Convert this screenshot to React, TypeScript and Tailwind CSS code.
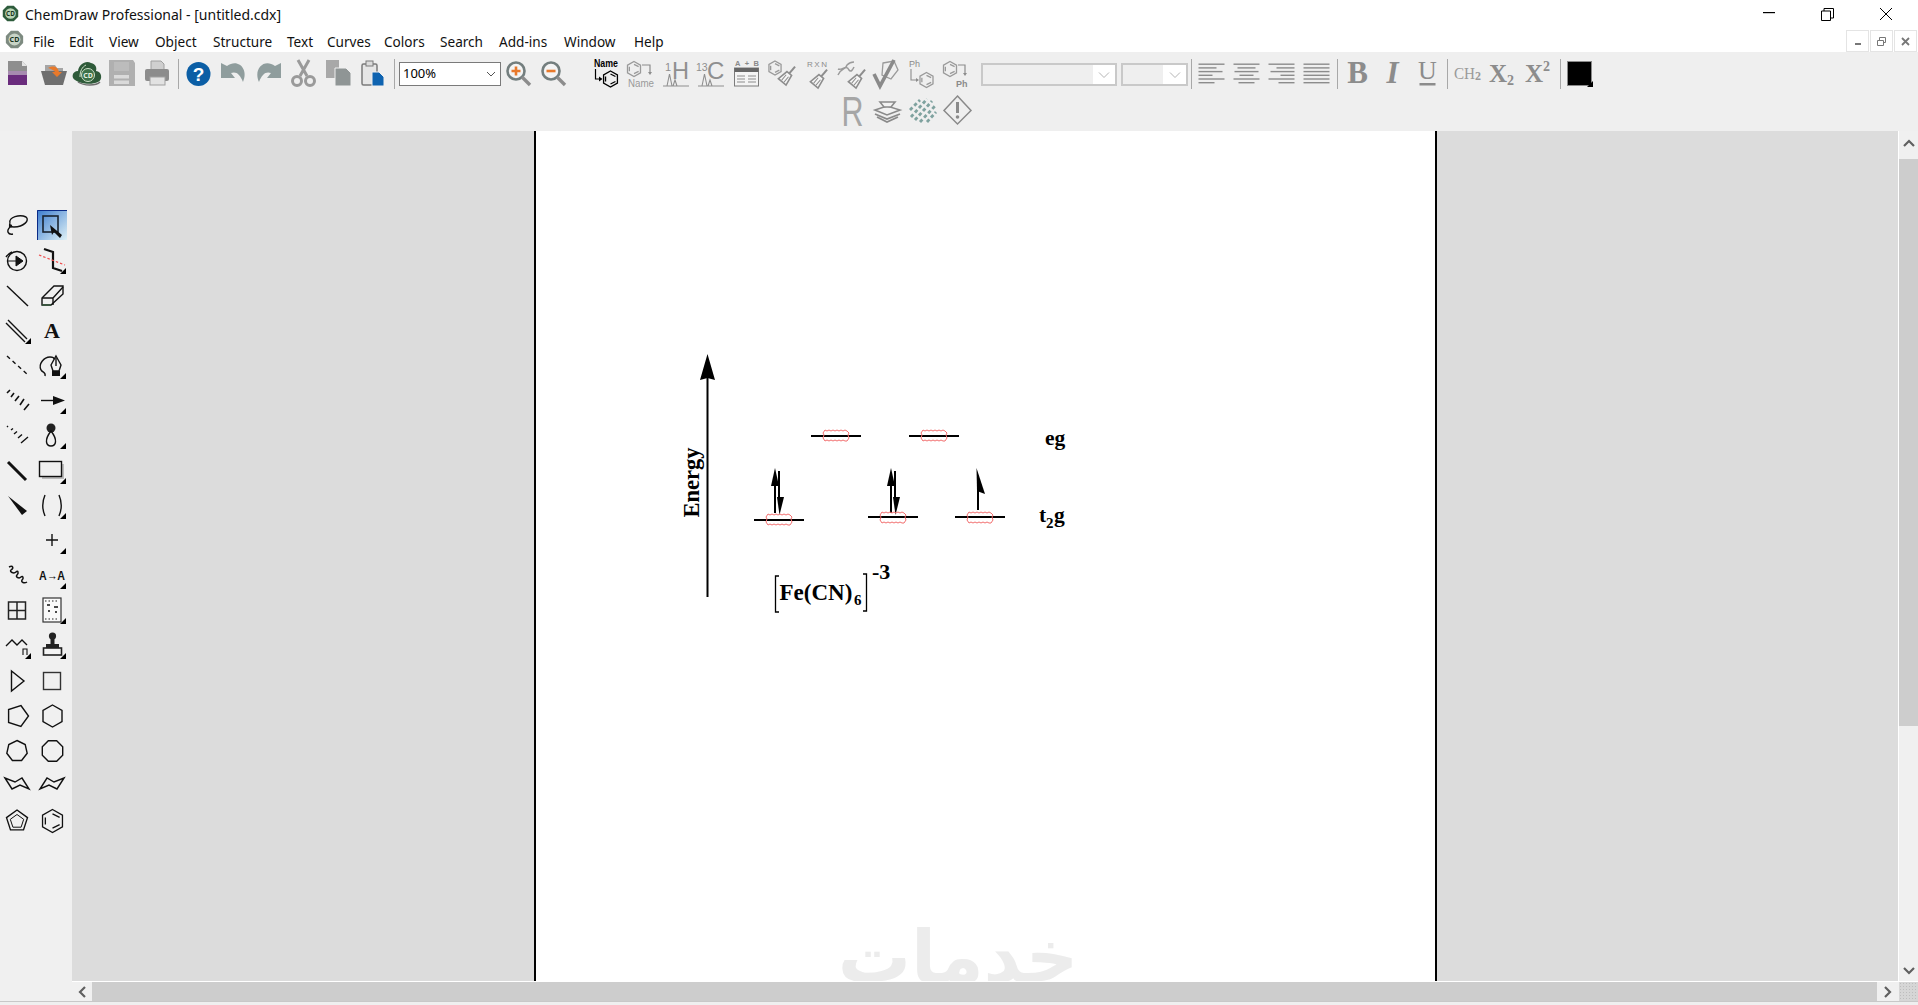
import type { ReactNode } from 'react';

const SERIF = "font-['Liberation_Serif','Times_New_Roman',serif]";
const UI = "font-['Noto_Sans','Open_Sans',sans-serif]";

const MENU = [
  { label: 'File', w: 'w-[36px]' },
  { label: 'Edit', w: 'w-[40px]' },
  { label: 'View', w: 'w-[46px]' },
  { label: 'Object', w: 'w-[58px]' },
  { label: 'Structure', w: 'w-[74px]' },
  { label: 'Text', w: 'w-[40px]' },
  { label: 'Curves', w: 'w-[57px]' },
  { label: 'Colors', w: 'w-[56px]' },
  { label: 'Search', w: 'w-[59px]' },
  { label: 'Add-ins', w: 'w-[65px]' },
  { label: 'Window', w: 'w-[70px]' },
  { label: 'Help', w: 'w-[40px]' },
];

function hex(cx: number, cy: number, r: number) {
  const k = r * 0.866;
  return `M${cx} ${cy - r}L${cx + k} ${cy - r / 2}V${cy + r / 2}L${cx} ${cy + r}L${cx - k} ${cy + r / 2}V${cy - r / 2}Z`;
}

// regular polygon, point up
function ngon(cx: number, cy: number, r: number, n: number, start = -90) {
  const pts = [];
  for (let i = 0; i < n; i++) {
    const a = ((start + (360 / n) * i) * Math.PI) / 180;
    pts.push(`${(cx + r * Math.cos(a)).toFixed(1)},${(cy + r * Math.sin(a)).toFixed(1)}`);
  }
  return pts.join(' ');
}

function Ic({ children, className = '' }: { children: ReactNode; className?: string }) {
  return (
    <svg width="35" height="35" viewBox="0 0 35 35" className={`block shrink-0 overflow-visible ${className}`}>
      {children}
    </svg>
  );
}

function Sep({ w }: { w: string }) {
  return (
    <div className={`${w} h-[35px] shrink-0 flex justify-center items-center`}>
      <div className="w-px h-[30px] bg-[#a8a8a8]" />
    </div>
  );
}

function Broom({ x, y, c = '#8d8d8d' }: { x: number; y: number; c?: string }) {
  return (
    <g transform={`translate(${x} ${y}) rotate(40)`} fill="none" stroke={c} strokeWidth="1.6">
      <path d="M0 -11V-2" strokeWidth="2" />
      <path d="M-3 -2H3L5 9H-5Z" fill="#f5f5f5" />
      <path d="M-1.5 1V8M1.5 1V8" strokeWidth="1" />
    </g>
  );
}

function Benz({ cx, cy, r, c }: { cx: number; cy: number; r: number; c: string }) {
  const k = r * 0.62;
  return (
    <g fill="none" stroke={c} strokeWidth="1.3">
      <path d={hex(cx, cy, r)} />
      <path d={`M${cx - k} ${cy - k * 0.5}V${cy + k * 0.5}M${cx} ${cy - k}L${cx + k} ${cy - k * 0.5}M${cx} ${cy + k}L${cx + k} ${cy + k * 0.5}`} />
    </g>
  );
}

function AlignIcon({ rows }: { rows: number[][] }) {
  return (
    <Ic>
      {rows.map((r, i) => (
        <rect key={i} x={r[0]} y={7.5 + i * 3.7} width={r[1]} height="1.4" fill="#8c8c8c" />
      ))}
    </Ic>
  );
}

function Combo({ w, fill }: { w: string; fill: string }) {
  return (
    <div className={`${w} h-[23px] mt-[7px] shrink-0 bg-white border-2 border-[#c9c9c9] flex items-center`}>
      <div className={`${fill} h-full bg-[#efefef]`} />
      <svg width="12" height="8" viewBox="0 0 12 8" className="ml-auto mr-[5px]">
        <path d="M1 1.5L6 6.5L11 1.5" fill="none" stroke="#b5b5b5" strokeWidth="1" />
      </svg>
    </div>
  );
}

function CdLogo({ size, muted }: { size: number; muted?: boolean }) {
  return (
    <svg width={size} height={size} viewBox="0 0 20 20" className="block shrink-0">
      <polygon points={ngon(10, 10, 9.8, 8, -67.5)} fill={muted ? '#7d8a80' : '#2e5c3c'} />
      <circle cx="10" cy="10" r="6.3" fill={muted ? '#c8d4c6' : '#b9d3b4'} />
      <text x="10" y="12.6" textAnchor="middle" fontSize="7.5" fontWeight="700" fill="#18361f" className={UI}>
        CD
      </text>
    </svg>
  );
}

function TopToolbar() {
  return (
    <div className="h-[79px] bg-[#efefef] pt-[4px] shrink-0">
      <div className="flex h-[35px]">
        {/* new */}
        <Ic>
          <path d="M8 5H22L27 10V29H8Z" fill="#8e8e8e" />
          <path d="M22 5L27 10H22Z" fill="#e4e4e4" />
          <path d="M8 15H27V19H8Z" fill="#a78bb0" />
          <path d="M8 19H27V29H8Z" fill="#6a2c7d" />
        </Ic>
        {/* open */}
        <Ic>
          <path d="M10 9H20L22 12H28V27H10Z" fill="#a5a5a5" />
          <path d="M6 15H32L28 29H10Z" fill="#6f6f6f" />
          <path d="M13 12C19 9 23 11 24 16H27L22 21L17 16H20C19 14 16 13 13 12Z" fill="#e8792b" />
        </Ic>
        {/* cloud */}
        <Ic>
          <path d="M5 24C1 22 2 15 8 15C9 8 16 4 21 7C26 8 27 12 26 15C32 15 33 24 28 26C22 29 10 28 5 24Z" fill="#2e5a39" />
          <path d="M8 26C14 30 26 30 30 26" fill="none" stroke="#6e6e6e" strokeWidth="1.5" />
          <circle cx="18" cy="19" r="6.5" fill="#3d7148" stroke="#cfe0c9" strokeWidth="1" />
          <path d="M10 21C10 15 12 11 16 9" fill="none" stroke="#cfe0c9" strokeWidth="1" />
          <text x="18" y="21.5" textAnchor="middle" fontSize="7" fontWeight="700" fill="#e6efe2" className={UI}>
            CD
          </text>
        </Ic>
        {/* save */}
        <Ic>
          <path d="M4 4H28L30 7V30H4Z" fill="#b0b0b0" />
          <rect x="9" y="6" width="15" height="9" fill="#bcbcbc" />
          <rect x="9" y="19" width="15" height="3.5" fill="#dadada" />
          <rect x="9" y="24.5" width="15" height="3.5" fill="#dadada" />
        </Ic>
        {/* print */}
        <Ic>
          <path d="M11 5H21L24 8V14H11Z" fill="#cfcfcf" stroke="#a0a0a0" />
          <rect x="5" y="13" width="24" height="12" rx="2" fill="#8c8c8c" />
          <rect x="10" y="21" width="15" height="8" fill="#e2e2e2" stroke="#a0a0a0" />
        </Ic>
        <Sep w="w-[6px]" />
        {/* help */}
        <Ic>
          <circle cx="17.5" cy="18" r="12" fill="#0b5ea5" />
          <text x="17.5" y="24.5" textAnchor="middle" fontSize="19" fontWeight="700" fill="#fff" className="font-['Liberation_Sans',sans-serif]">
            ?
          </text>
        </Ic>
        {/* undo */}
        <Ic>
          <path d="M5 7V22H19L15 17C20 15 24 18 27 26C33 13 22 2 11 10Z" fill="#8f9d9d" />
        </Ic>
        {/* redo */}
        <Ic>
          <path d="M30 7V22H16L20 17C15 15 11 18 8 26C2 13 13 2 24 10Z" fill="#8f9d9d" />
        </Ic>
        {/* cut */}
        <Ic>
          <path d="M12 4L21 20M23 4L14 20" stroke="#9a9a9a" strokeWidth="3" fill="none" />
          <ellipse cx="11" cy="25" rx="4.5" ry="4.5" fill="none" stroke="#9a9a9a" strokeWidth="3" />
          <ellipse cx="24" cy="25" rx="4.5" ry="4.5" fill="none" stroke="#9a9a9a" strokeWidth="3" />
        </Ic>
        {/* copy */}
        <Ic>
          <path d="M5 4H18V22H5Z" fill="#a8a8a8" />
          <path d="M14 12H25L30 17V30H14Z" fill="#8f9595" stroke="#efefef" />
        </Ic>
        {/* paste */}
        <Ic>
          <rect x="6" y="8" width="15" height="21" rx="1.5" fill="#e6e6e6" stroke="#7b7b7b" strokeWidth="1.5" />
          <rect x="10" y="5" width="7" height="5" fill="#dcdcdc" stroke="#7b7b7b" />
          <path d="M16 16H23L28 21V30H16Z" fill="#0e63b0" stroke="#efefef" />
        </Ic>
        <Sep w="w-[7px]" />
        <div className="w-[102px] h-[24px] mt-[6px] ml-px shrink-0 bg-white border border-[#7a7a7a] flex items-center pl-[3px]">
          <span className={`${UI} text-[13px] text-black`}>100%</span>
          <svg width="10" height="6" viewBox="0 0 10 6" className="ml-auto mr-[4px]">
            <path d="M1 1L5 5L9 1" fill="none" stroke="#555" strokeWidth="1" />
          </svg>
        </div>
        {/* zoom in */}
        <Ic>
          <circle cx="15" cy="15" r="8.5" fill="#f4f4f4" stroke="#737e7e" strokeWidth="2.6" />
          <path d="M21 21L29 29" stroke="#8c8c8c" strokeWidth="3.4" />
          <path d="M15 10.5V19.5M10.5 15H19.5" stroke="#e8792b" strokeWidth="2.6" />
        </Ic>
        {/* zoom out */}
        <Ic>
          <circle cx="15" cy="15" r="8.5" fill="#f4f4f4" stroke="#737e7e" strokeWidth="2.6" />
          <path d="M21 21L29 29" stroke="#8c8c8c" strokeWidth="3.4" />
          <path d="M10.5 15H19.5" stroke="#e8792b" strokeWidth="2.6" />
        </Ic>
        <div className="w-[18px] shrink-0" />
        {/* name to structure */}
        <Ic>
          <text x="5" y="10.5" fontSize="10" fontWeight="700" textLength="24" lengthAdjust="spacingAndGlyphs" fill="#000" className="font-['Liberation_Sans',sans-serif]">
            Name
          </text>
          <path d="M6.5 13V23H11" fill="none" stroke="#000" strokeWidth="1.2" />
          <path d="M10 20.5L13.5 23L10 25.5Z" fill="#000" />
          <Benz cx={21.5} cy={23} r={8} c="#000" />
        </Ic>
        {/* structure to name */}
        <Ic>
          <Benz cx={10} cy={13} r={7.5} c="#9a9a9a" />
          <path d="M18 9H26V17" fill="none" stroke="#8c8c8c" strokeWidth="1.2" />
          <path d="M24 16H28L26 19Z" fill="#8c8c8c" />
          <text x="4" y="31" fontSize="10" textLength="26" lengthAdjust="spacingAndGlyphs" fill="#9a9a9a" className="font-['Liberation_Sans',sans-serif]">
            Name
          </text>
        </Ic>
        {/* 1H */}
        <Ic>
          <text x="13" y="23" fontSize="24" textLength="17" lengthAdjust="spacingAndGlyphs" fill="#8f8f8f" className="font-['Liberation_Sans',sans-serif]">
            H
          </text>
          <text x="6" y="15" fontSize="11" fill="#8f8f8f" className="font-['Liberation_Sans',sans-serif]">
            1
          </text>
          <path d="M4 30H30M8 30L10.5 18L13 30M14 30L16 24L18 30" fill="none" stroke="#8f8f8f" strokeWidth="1.1" />
        </Ic>
        {/* 13C */}
        <Ic>
          <text x="13" y="23" fontSize="24" fill="#8f8f8f" className="font-['Liberation_Sans',sans-serif]">
            C
          </text>
          <text x="2" y="15" fontSize="10.5" fill="#8f8f8f" className="font-['Liberation_Sans',sans-serif]">
            13
          </text>
          <path d="M4 30H30M8 30L10.5 18L13 30M14 30L16 24L18 30" fill="none" stroke="#8f8f8f" strokeWidth="1.1" />
        </Ic>
        {/* table */}
        <Ic>
          <text x="6" y="10" fontSize="7.5" fontWeight="700" textLength="24" fill="#8a8a8a" className="font-['Liberation_Sans',sans-serif]">
            A + B
          </text>
          <rect x="5.5" y="12" width="24" height="18" fill="#f4f4f4" stroke="#7c7c7c" />
          <rect x="5.5" y="12" width="24" height="4" fill="#666" />
          <path d="M8 20H16M8 23H16M8 26H16M19 20H27M19 23H27M19 26H27" stroke="#8c8c8c" strokeWidth="1.2" />
        </Ic>
        {/* clean up structure */}
        <Ic>
          <Benz cx={11} cy={12} r={7} c="#9a9a9a" />
          <Broom x={24} y={19} />
        </Ic>
        {/* clean up reaction */}
        <Ic>
          <text x="8" y="11" fontSize="8" textLength="20" fill="#8c8c8c" className="font-['Liberation_Sans',sans-serif]">
            RXN
          </text>
          <Broom x={21} y={22} />
        </Ic>
        {/* clean up biopolymer */}
        <Ic>
          <path d="M4 19C8 11 12 14 13 9C16 6 18 6 20 6M4 13C8 15 12 8 15 14C17 17 19 13 20 11" fill="none" stroke="#9a9a9a" strokeWidth="1.5" />
          <Broom x={24} y={22} />
        </Ic>
        {/* check structure */}
        <Ic>
          <path d="M14 7L25 5L29 14L22 23L13 19Z" fill="none" stroke="#9a9a9a" strokeWidth="1.3" />
          <path d="M5 18L11 30L25 4" fill="none" stroke="#8a8a8a" strokeWidth="3.6" />
        </Ic>
        {/* Ph to structure */}
        <Ic>
          <text x="5" y="11" fontSize="9" fill="#8a8a8a" className="font-['Liberation_Sans',sans-serif]">
            Ph
          </text>
          <path d="M7 13V24H13" fill="none" stroke="#8c8c8c" strokeWidth="1.1" />
          <path d="M12 22L15 24L12 26Z" fill="#8c8c8c" />
          <Benz cx={22.5} cy={24} r={7.5} c="#9a9a9a" />
        </Ic>
        {/* structure to Ph */}
        <Ic>
          <Benz cx={11} cy={13} r={7.5} c="#9a9a9a" />
          <path d="M19 9H26V18" fill="none" stroke="#8c8c8c" strokeWidth="1.2" />
          <path d="M24 17H28L26 20Z" fill="#8c8c8c" />
          <text x="17" y="31" fontSize="9" fontWeight="700" fill="#8a8a8a" className="font-['Liberation_Sans',sans-serif]">
            Ph
          </text>
        </Ic>
        <div className="w-[7px] shrink-0" />
        <Combo w="w-[136px]" fill="w-[110px]" />
        <div className="w-[4px] shrink-0" />
        <Combo w="w-[67px]" fill="w-[40px]" />
        <div className="w-[1px] shrink-0" />
        <Sep w="w-[5px]" />
        <AlignIcon rows={[[4.5, 26], [4.5, 18], [4.5, 24], [4.5, 14], [4.5, 26], [4.5, 16]]} />
        <AlignIcon rows={[[4.5, 26], [8.5, 18], [5.5, 24], [10.5, 14], [4.5, 26], [9.5, 16]]} />
        <AlignIcon rows={[[4.5, 26], [12.5, 18], [6.5, 24], [16.5, 14], [4.5, 26], [14.5, 16]]} />
        <AlignIcon rows={[[4.5, 26], [4.5, 26], [4.5, 26], [4.5, 26], [4.5, 26], [4.5, 26]]} />
        <Sep w="w-[6px]" />
        <Ic>
          <text x="17.5" y="27" textAnchor="middle" fontSize="31" fontWeight="700" fill="#8c8c8c" className={SERIF}>
            B
          </text>
        </Ic>
        <Ic>
          <text x="17.5" y="27" textAnchor="middle" fontSize="31" fontWeight="700" fontStyle="italic" fill="#8c8c8c" className={SERIF}>
            I
          </text>
        </Ic>
        <Ic>
          <text x="17.5" y="23" textAnchor="middle" fontSize="26" fill="#8c8c8c" className={SERIF}>
            U
          </text>
          <rect x="9.5" y="27" width="16" height="2.5" fill="#8c8c8c" />
        </Ic>
        <Sep w="w-[5px]" />
        <Ic>
          <text x="4" y="23" fontSize="16" textLength="21" lengthAdjust="spacingAndGlyphs" fill="#9a9a9a" className={SERIF}>
            CH
          </text>
          <text x="25" y="24" fontSize="12" fontWeight="700" fill="#9a9a9a" className={SERIF}>
            2
          </text>
        </Ic>
        <Ic>
          <text x="4" y="26" fontSize="25" fontWeight="700" fill="#8c8c8c" className={SERIF}>
            X
          </text>
          <text x="22" y="29" fontSize="14" fontWeight="700" fill="#8c8c8c" className={SERIF}>
            2
          </text>
        </Ic>
        <Ic>
          <text x="5" y="26" fontSize="25" fontWeight="700" fill="#8c8c8c" className={SERIF}>
            X
          </text>
          <text x="23" y="15" fontSize="14" fontWeight="700" fill="#8c8c8c" className={SERIF}>
            2
          </text>
        </Ic>
        <Sep w="w-[10px]" />
        <div className="relative w-[25px] h-[25px] mt-[5px] ml-[2px] shrink-0 bg-black border border-[#8a8a8a]">
          <svg width="6" height="6" viewBox="0 0 6 6" className="absolute -right-[2px] -bottom-[2px]">
            <polygon points="0,6 6,0 6,6" fill="#000" />
          </svg>
        </div>
      </div>
      <div className="flex h-[35px] mt-[2px] pl-[835px]">
        <Ic>
          <text x="6.5" y="33" fontSize="43" textLength="22" lengthAdjust="spacingAndGlyphs" fill="#a6a6a6" className="font-['Liberation_Sans',sans-serif]">
            R
          </text>
        </Ic>
        <Ic>
          <path d="M5 17L17 13L30 17L17 22Z" fill="#f2f2f2" stroke="#8a8a8a" strokeWidth="1.6" />
          <path d="M5 21L17 26L30 21M7 24L17 29L28 24" fill="none" stroke="#8a8a8a" strokeWidth="1.8" />
          <path d="M10 9H25L21 14H14Z" fill="#f2f2f2" stroke="#8a8a8a" strokeWidth="1.6" />
        </Ic>
        <Ic>
          <g stroke="#7fa29f" strokeWidth="2.8" strokeDasharray="3.5 2.5" fill="none">
            <path d="M5 17L15 7" />
            <path d="M6 24L22 6" />
            <path d="M10 27L27 8" />
            <path d="M15 29L30 13" />
            <path d="M22 29L31 19" />
          </g>
        </Ic>
        <Ic>
          <path d="M17.5 3L31 17.5L17.5 31L4 17.5Z" fill="none" stroke="#8a8a8a" strokeWidth="1.5" />
          <path d="M17.5 9V20" stroke="#8a8a8a" strokeWidth="3" />
          <circle cx="17.5" cy="24" r="1.8" fill="#8a8a8a" />
        </Ic>
      </div>
    </div>
  );
}

function Tool({ children, corner }: { children?: ReactNode; corner?: boolean }) {
  return (
    <Ic>
      {children}
      {corner && <polygon points="25,31 31,25 31,31" fill="#000" />}
    </Ic>
  );
}

function Toolbox() {
  const stroke = { fill: 'none', stroke: '#111', strokeWidth: 1.4 };
  return (
    <div className="w-[72px] shrink-0 bg-[#f0f0f0] pt-[77px]">
      <div className="grid grid-cols-[35px_35px]">
        <Tool>
          <path d="M10 15C8 9 20 6 26 9C30 12 24 19 14 19C10 19 9 17 10 15M10 19C6 23 8 27 13 26" {...stroke} />
          <circle cx="10.5" cy="18" r="1.7" fill="#111" />
        </Tool>
        <Tool>
          <defs>
            <linearGradient id="selTool" x1="0" y1="0" x2="1" y2="1">
              <stop offset="0" stopColor="#3b7ccf" />
              <stop offset="1" stopColor="#dff1f6" />
            </linearGradient>
          </defs>
          <rect x="2" y="2" width="30" height="30" fill="url(#selTool)" />
          <path d="M2.5 32V2.5H32" fill="none" stroke="#0a2a86" />
          <rect x="8" y="8" width="15" height="16" fill="none" stroke="#1a2430" strokeWidth="1.6" />
          <path d="M15 17L27 27L25 30L19 24L17 27Z" fill="#111" />
        </Tool>

        <Tool>
          <circle cx="17" cy="18" r="9.5" {...stroke} />
          <path d="M6 14C8 11 10 10 12 9" {...stroke} />
          <path d="M8 18H16V13L23 18L16 23V18" fill="#111" stroke="#111" />
        </Tool>
        <Tool corner>
          <path d="M9 6L18 9V25L27 28" fill="none" stroke="#111" strokeWidth="2.2" />
          <path d="M4 12L30 22" fill="none" stroke="#ef4d4d" strokeWidth="1.2" strokeDasharray="2.5 2" />
        </Tool>

        <Tool>
          <path d="M7 8L28 28" {...stroke} />
        </Tool>
        <Tool>
          <path d="M7 20L19 8H28L28 16L16 27H7Z" {...stroke} />
          <path d="M7 20H18V27M18 20L28 9" {...stroke} />
          <path d="M7 27H16" fill="none" stroke="#365c3e" strokeWidth="1.4" />
        </Tool>

        <Tool corner>
          <path d="M8 7L27 26M6 10L25 29" {...stroke} />
        </Tool>
        <Tool>
          <text x="17" y="25" textAnchor="middle" fontSize="22" fontWeight="700" fill="#111" className={SERIF}>
            A
          </text>
        </Tool>

        <Tool>
          <path d="M7 8L28 27" fill="none" stroke="#111" strokeWidth="1.4" strokeDasharray="4 3.5" />
        </Tool>
        <Tool corner>
          <path d="M6 22C3 16 9 9 15 9C18 9 19 10 19 11M6 22C8 25 11 24 10 28" {...stroke} />
          <path d="M21 8L26 17L24 23H18L16 17Z" {...stroke} />
          <path d="M21 10V18" {...stroke} />
          <rect x="17" y="23" width="8" height="5" fill="#111" />
        </Tool>

        <Tool>
          <path d="M7 10L10 7M11 14L14 10M15 18L19 13M20 22L24 16M24 27L29 21" fill="none" stroke="#111" strokeWidth="1.6" />
        </Tool>
        <Tool corner>
          <path d="M6 17.5H20" {...stroke} />
          <path d="M18 13L30 17.5L18 22Z" fill="#111" />
        </Tool>

        <Tool>
          <path d="M7 9L8 8M11 12L13 10.5M14 16L17 13.5M18 20L22 16.5M21 25L28 19" fill="none" stroke="#111" strokeWidth="1.4" />
        </Tool>
        <Tool corner>
          <circle cx="16" cy="10" r="4.5" fill="#222" />
          <path d="M16 13C23 22 21 28 16 28C11 28 9 22 16 13Z" {...stroke} />
        </Tool>

        <Tool>
          <path d="M8 9L26 27" fill="none" stroke="#111" strokeWidth="3" />
        </Tool>
        <Tool corner>
          <rect x="7" y="11" width="22" height="15" fill="#bbb" />
          <rect x="4.5" y="8.5" width="22" height="15" fill="#f0f0f0" stroke="#111" strokeWidth="1.4" />
        </Tool>

        <Tool>
          <path d="M8 8L27 23L22 27Z" fill="#111" />
        </Tool>
        <Tool corner>
          <path d="M10 7C7 14 7 21 10 28M24 7C27 14 27 21 24 28" {...stroke} />
        </Tool>

        <Tool />
        <Tool corner>
          <path d="M17 11V23M11 17H23" {...stroke} />
        </Tool>

        <Tool>
          <path d="M9 9C13 7 14 10 11 12C9 14 14 16 16 14C18 12 19 15 17 17C15 19 19 21 21 19C23 17 24 21 22 22C21 24 24 26 27 24" {...stroke} strokeWidth={1.5} />
        </Tool>
        <Tool corner>
          <text x="4" y="22" fontSize="13" fontWeight="700" textLength="26" lengthAdjust="spacingAndGlyphs" fill="#111" className="font-['Liberation_Sans',sans-serif]">
            A→A
          </text>
        </Tool>

        <Tool>
          <rect x="8.5" y="9" width="17" height="17" fill="none" stroke="#222" strokeWidth="1.5" />
          <path d="M17 9V26M8.5 17.5H25.5" stroke="#222" strokeWidth="1.5" />
        </Tool>
        <Tool corner>
          <rect x="8" y="5" width="18" height="24" fill="#fafafa" stroke="#333" strokeWidth="1.2" />
          <path d="M10 8H24M10 26H24" stroke="#222" strokeWidth="1" strokeDasharray="1.5 2" />
          <path d="M12 12H15M19 14H23M13 18H15M20 19H22" stroke="#111" strokeWidth="1.6" />
        </Tool>

        <Tool corner>
          <path d="M6 18L12 12L17 17L22 12L27 17" {...stroke} />
          <path d="M23 27V21H27V27" {...stroke} strokeWidth={1.1} />
        </Tool>
        <Tool corner>
          <circle cx="17.5" cy="8" r="3.6" fill="#222" />
          <path d="M15.5 10H19.5V16H24V20H11V16H15.5Z" fill="#222" />
          <rect x="8.5" y="20" width="18" height="7" fill="#f4f4f4" stroke="#222" strokeWidth="1.6" />
        </Tool>

        <Tool>
          <polygon points="11.5,8 24,18 11.5,28" {...stroke} />
        </Tool>
        <Tool>
          <rect x="8.5" y="9.5" width="17" height="17" fill="none" stroke="#333" strokeWidth="1.4" />
        </Tool>

        <Tool>
          <polygon points={ngon(17.5, 18, 11, 5, -90 + 18)} {...stroke} />
        </Tool>
        <Tool>
          <polygon points={ngon(17.5, 18, 11, 6)} {...stroke} />
        </Tool>

        <Tool>
          <polygon points={ngon(17, 18, 10.5, 7)} {...stroke} />
        </Tool>
        <Tool>
          <polygon points={ngon(17.5, 18, 11, 8, -67.5)} {...stroke} />
        </Tool>

        <Tool>
          <polygon points="5,10 12,21 20,17 29,21 22,10 15,14" {...stroke} />
        </Tool>
        <Tool>
          <polygon points="29,10 22,21 14,17 5,21 12,10 19,14" {...stroke} />
        </Tool>

        <Tool>
          <polygon points={ngon(17, 18, 11, 5)} {...stroke} />
          <polygon points={ngon(17, 18.5, 7, 5)} {...stroke} strokeWidth={1} />
        </Tool>
        <Tool>
          <Benz cx={17.5} cy={18} r={11.5} c="#111" />
        </Tool>
      </div>
    </div>
  );
}

// red squiggle box ChemDraw puts round unparsed text
function Wavy({ x, y, w, h }: { x: number; y: number; w: number; h: number }) {
  const step = 2;
  let d = `M${x + 2} ${y}`;
  let up = 0;
  for (let i = x + 2 + step; i <= x + w - 2; i += step) {
    up = up ? 0 : 1;
    d += `L${i} ${y + up}`;
  }
  d += `L${x + w} ${y + 3}L${x + w - 1} ${y + 5}L${x + w} ${y + h - 3}L${x + w - 2} ${y + h}`;
  for (let i = x + w - 2 - step; i >= x + 2; i -= step) {
    up = up ? 0 : 1;
    d += `L${i} ${y + h - up}`;
  }
  d += `L${x} ${y + h - 3}L${x + 1} ${y + 5}L${x} ${y + 3}Z`;
  return <path d={d} fill="none" stroke="#f26f6f" strokeWidth="1" />;
}

function Diagram() {
  return (
    <svg width="899" height="850" viewBox="536 131 899 850" className="absolute left-0 top-0 block">
      <text x="958" y="982" textAnchor="middle" fontSize="73" fontWeight="700" fill="#ececec" direction="rtl" className="font-['DejaVu_Sans',sans-serif]">
        خدمات
      </text>

      <g stroke="#000" strokeWidth="2" fill="none">
        <path d="M707.5 597V376" />
        <path d="M811 436H861M909 436H959M754 520H804M868 517H918M955 517H1005" />
        <path d="M775 513V482" />
        <path d="M779 471V500" />
        <path d="M891 513V482" />
        <path d="M895 471V500" />
        <path d="M978 510V490" />
      </g>
      <path d="M707.5 354L715 380L707.5 378L700 380Z" fill="#000" />
      <path d="M775 468L779 486H771Z" fill="#000" />
      <path d="M779.5 515L777 497H784Z" fill="#000" />
      <path d="M891 468L895 486H887Z" fill="#000" />
      <path d="M895.5 515L893 497H900Z" fill="#000" />
      <path d="M976.5 468L985 494L977 491Z" fill="#000" />

      <Wavy x={823} y={430} w={26} h={11} />
      <Wavy x={921} y={430} w={26} h={11} />
      <Wavy x={766} y={514} w={26} h={11} />
      <Wavy x={880} y={512} w={26} h={11} />
      <Wavy x={967} y={512} w={26} h={11} />

      <g className={SERIF} fontWeight="700" fill="#000">
        <text transform="translate(699 517.5) rotate(-90)" fontSize="22.5">
          Energy
        </text>
        <text x="1045" y="445" fontSize="21.5">
          eg
        </text>
        <text x="1039" y="522" fontSize="21.5">
          t
        </text>
        <text x="1046" y="528" fontSize="15">
          2
        </text>
        <text x="1054" y="522" fontSize="21.5">
          g
        </text>
        <text x="779.5" y="600" fontSize="23">
          Fe(CN)
        </text>
        <text x="854" y="605" fontSize="15">
          6
        </text>
        <text x="872" y="579" fontSize="22">
          -3
        </text>
      </g>
      <path d="M779 576H775.5V612H779M863 574H866.5V611H863" fill="none" stroke="#000" strokeWidth="1.3" />
    </svg>
  );
}

function Chevron({ d }: { d: string }) {
  return (
    <svg width="14" height="14" viewBox="0 0 14 14" className="block">
      <path d={d} fill="none" stroke="#606060" strokeWidth="2.2" />
    </svg>
  );
}

export default function App() {
  return (
    <div className="w-[1918px] h-[1005px] flex flex-col overflow-hidden bg-white">
      {/* title bar */}
      <div className="h-[26px] flex items-center shrink-0 bg-white relative">
        <div className="ml-[2px] w-[23px]">
          <CdLogo size={17} />
        </div>
        <span className={`${UI} text-[14px] pt-[3px] text-[#111] whitespace-nowrap`}>ChemDraw Professional - [untitled.cdx]</span>
        <div className="ml-auto flex items-center mr-[4px] pt-[2px]">
          <svg width="12" height="2" viewBox="0 0 12 2" className="mr-[46px] mt-[-3px]">
            <rect width="12" height="1.2" fill="#000" />
          </svg>
          <svg width="13" height="13" viewBox="0 0 13 13" className="mr-[45px]">
            <path d="M.5 3H9.5V12.5H.5ZM3 3V.5H12.5V10H9.5" fill="none" stroke="#000" />
          </svg>
          <svg width="14" height="14" viewBox="0 0 14 14" className="mr-[21px]">
            <path d="M1 1L13 13M13 1L1 13" stroke="#000" strokeWidth="1" />
          </svg>
        </div>
      </div>

      {/* menu bar */}
      <div className="h-[26px] flex shrink-0 bg-white">
        <div className="pl-[5px] w-[33px] pt-[4px] shrink-0">
          <CdLogo size={19} muted />
        </div>
        {MENU.map((m) => (
          <div key={m.label} className={`${m.w} ${UI} shrink-0 text-[13.6px] leading-[26px] pt-[3px] text-[#111]`}>
            {m.label}
          </div>
        ))}
        <div className="ml-auto flex gap-[1px] pt-[4px] pr-[1px]">
          <div className="w-[23px] h-[22px] border border-[#e4e4e4] flex items-end justify-center pb-[6px]">
            <div className="w-[6px] h-[2px] bg-[#777]" />
          </div>
          <div className="w-[23px] h-[22px] border border-[#e4e4e4] flex items-center justify-center">
            <svg width="9" height="9" viewBox="0 0 9 9">
              <path d="M.5 3.5H6.5V8.5H.5ZM2.5 3V.5H8.5V5.5H6.5" fill="none" stroke="#777" />
            </svg>
          </div>
          <div className="w-[23px] h-[22px] border border-[#e4e4e4] flex items-center justify-center">
            <svg width="9" height="9" viewBox="0 0 9 9">
              <path d="M1 1L8 8M8 1L1 8" stroke="#777" strokeWidth="1.8" />
            </svg>
          </div>
        </div>
      </div>

      <TopToolbar />

      {/* main area */}
      <div className="flex h-[871px] shrink-0 border-b border-[#c8c8c8] bg-[#f0f0f0]">
        <Toolbox />
        <div className="flex-1 flex flex-col min-w-0">
          <div className="flex flex-1 min-h-0 border-b border-white">
            <div className="flex-1 bg-[#dcdcdc] border-r border-white pl-[462px] min-w-0">
              <div className="relative w-[899px] h-full bg-white border-x-2 border-black overflow-hidden box-content">
                <Diagram />
              </div>
            </div>
            {/* vertical scrollbar */}
            <div className="w-[19px] shrink-0 flex flex-col bg-[#f0f0f0]">
              <div className="h-[28px] pt-[5px] flex justify-center">
                <Chevron d="M2 10L7 5L12 10" />
              </div>
              <div className="h-[567px] bg-[#cdcdcd]" />
              <div className="mt-auto h-[20px] flex items-center justify-center">
                <Chevron d="M2 4L7 9L12 4" />
              </div>
            </div>
          </div>
          {/* horizontal scrollbar */}
          <div className="h-[19px] flex shrink-0 bg-[#f0f0f0]">
            <div className="w-[20px] flex items-center justify-center">
              <Chevron d="M10 2L5 7L10 12" />
            </div>
            <div className="flex-1 bg-[#cdcdcd]" />
            <div className="w-[22px] flex items-center justify-center">
              <Chevron d="M4 2L9 7L4 12" />
            </div>
            <div className="w-[19px] bg-[#d6d6d6] bg-[radial-gradient(#bdbdbd_1px,transparent_1px)] bg-[length:3px_3px]" />
          </div>
        </div>
      </div>
      <div className="flex-1 bg-[#efefef]" />
    </div>
  );
}
